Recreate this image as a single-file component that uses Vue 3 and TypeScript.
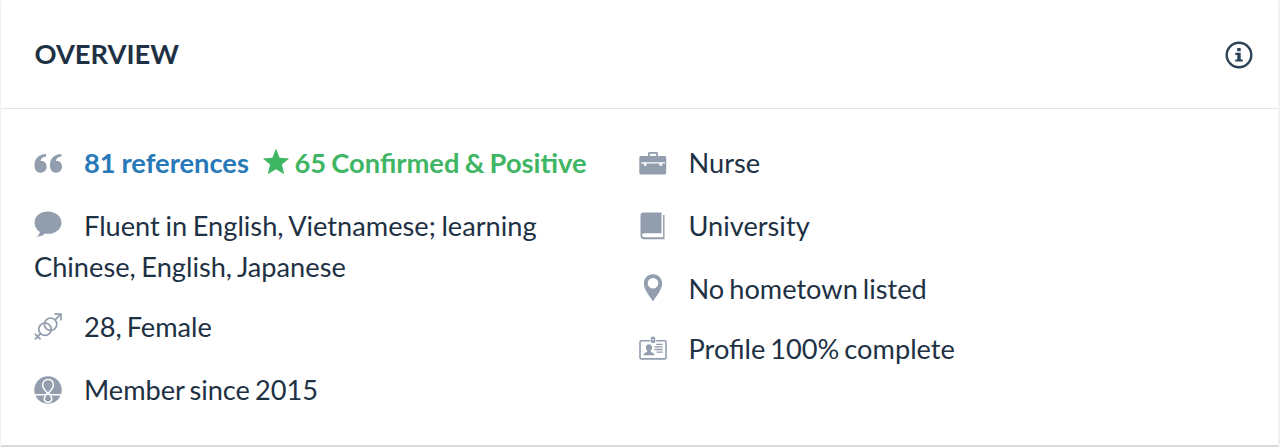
<script setup lang="ts">
type IconName = 'quote' | 'chat' | 'gender' | 'member' | 'briefcase' | 'book' | 'pin' | 'card'

interface Item {
  icon: IconName
  text: string
}

const about: Item[] = [
  { icon: 'chat', text: 'Fluent in English, Vietnamese; learning Chinese, English, Japanese' },
  { icon: 'gender', text: '28, Female' },
  { icon: 'member', text: 'Member since 2015' },
]

const details: Item[] = [
  { icon: 'briefcase', text: 'Nurse' },
  { icon: 'book', text: 'University' },
  { icon: 'pin', text: 'No hometown listed' },
  { icon: 'card', text: 'Profile 100% complete' },
]

const shapes: Record<IconName, string> = {
  quote:
    '<path d="M12 5v2.500C8.500 8 6.700 9.600 6.500 12.200c.3-.1.600-.1 1-.1 3 0 5.100 2.300 5.100 5.500 0 3.400-2.500 6.200-6 6.200-3.800 0-6.100-3-6.100-7.500C.5 9.900 4.500 5.300 12 5zM27.400 5v2.500c-3.500.5-5.300 2.100-5.500 4.700.3-.1.600-.1 1-.1 3 0 5.100 2.300 5.100 5.500 0 3.400-2.500 6.200-6 6.200-3.800 0-6.100-3-6.100-7.500 0-6.400 4-11 11.500-11.300z"/>',
  chat: '<path d="M14-.5C6.300-.5.5 4.300.5 10.700c0 3.900 2.200 7.200 5.400 9.200-.3 2.200-1.800 3.700-3.600 4.500 3.900.3 6.700-.9 8.700-2.900 1 .2 2 .3 3 .3 7.700 0 13.500-4.900 13.500-11.100S21.700-.5 14-.5z"/>',
  gender:
    '<g fill="none" stroke="currentColor" stroke-width="1.700"><circle cx="11" cy="16.200" r="6.200"/><circle cx="16.600" cy="11.200" r="6.200"/><path d="M21 6.800 27 .9M20.500 1.200H27V7.500M6.600 20.600.9 26.300M1 20.800l5.600 5.600"/></g>',
  member:
    '<circle cx="14" cy="14" r="13.700"/><path d="M1 18.800h8.500c1.800 0 2.900-.1 4.500-1.500 1.600 1.400 2.700 1.500 4.500 1.500H27M14 17.300C10.800 14.500 8.700 12.300 8.700 9c0-3.300 2.200-5.400 5.300-5.400s5.300 2.100 5.300 5.400c0 3.300-2.100 5.500-5.300 8.300-2.800 2.400-3.800 3.700-3.800 5.500 0 2.100 1.600 3.400 3.800 3.400s3.800-1.300 3.800-3.400c0-1.800-1-3.100-3.800-5.500z" fill="none" stroke="#fff" stroke-width="1.500"/>',
  briefcase:
    '<path fill-rule="evenodd" d="M9 7V4.700C9 3.600 9.700 3 10.700 3h6.600c1 0 1.700.6 1.700 1.700V7h6.500c1 0 1.700.7 1.700 1.700v15.100c0 1-.7 1.700-1.700 1.700H2c-1 0-1.700-.7-1.700-1.700V8.700C.3 7.700 1 7 2 7zm1.800 0h6.400V4.700h-6.400z"/><path d="M2 13.200h24v1.200h-2.800v2.300h-2.700v-2.300H7.500v2.300H4.800v-2.300H2z" fill="#fff"/>',
  book:
    '<path fill-rule="evenodd" d="M4.500.6h18v20.700H5.200c-1.500 0-2.200.7-2.200 1.800s.7 2.100 2.200 2.100h18.900V3.100h1.400v24.200H5c-2.300 0-3.500-1.600-3.500-4V3.500c0-1.800 1.100-2.900 3-2.900z"/>',
  pin: '<path fill-rule="evenodd" d="M14-.7c-5.100 0-9.100 3.900-9.100 9 0 6.200 4.500 11 9.100 18.200 4.600-7.200 9.100-12 9.100-18.200 0-5.100-4-9-9.100-9zm0 3.600a5.300 5.300 0 1 1 0 10.600 5.300 5.300 0 0 1 0-10.600z"/>',
  card:
    '<path d="M11.200 5.700H2.400c-.8 0-1.400.6-1.400 1.400v15.400c0 .8.6 1.400 1.400 1.400h23.200c.8 0 1.400-.6 1.400-1.400V7.100c0-.8-.6-1.400-1.400-1.400h-8.800" fill="none" stroke="currentColor" stroke-width="1.600"/><path fill-rule="evenodd" d="M13 1.700h2c.7 0 1.200.5 1.200 1.200v3.800c0 .7-.5 1.200-1.200 1.200h-2c-.7 0-1.200-.5-1.200-1.200V2.900c0-.7.5-1.200 1.200-1.200zm.3 2.300v1.300h1.400V4z"/><path d="M10 9.200c-2 0-3.100 1.400-3.100 3.300 0 1.300.5 2.400 1.300 3.100v1.200c-.3.700-3.700.9-3.700 3.500h11c0-2.600-3.400-2.800-3.700-3.500v-1.200c.8-.7 1.300-1.800 1.300-3.100 0-1.900-1.100-3.300-3.100-3.300z"/><path d="M17.200 9.300h6.500M15.500 11.900h8.200M15.500 14.500h8.200M17.500 17.100h6.200" fill="none" stroke="currentColor" stroke-width="1.300"/>',
}
</script>

<template>
  <section class="overview">
    <header class="head">
      <h2 class="title">OVERVIEW</h2>
      <svg class="info" viewBox="0 0 28 28" role="img" aria-label="Information">
        <circle cx="14" cy="14" r="12.300" fill="none" stroke="currentColor" stroke-width="2.400" />
        <path d="M12.200 7h3.500v3.200h-3.500zM10.300 11.700h5.400v6.700h2v2.200h-7.400v-2.200h2v-4.500h-2z" />
      </svg>
    </header>
    <div class="body">
      <ul class="list">
        <li class="item refs">
          <svg class="icon" viewBox="0 0 28 28" v-html="shapes.quote" />
          <a class="link">81 references</a>
          <span class="positive">
            <svg class="star" viewBox="0 0 28 28">
              <path d="M14 .8 17.700 9.700l9.500.7-7.300 6.200 2.300 9.700L14 21.200l-8.200 5.100 2.300-9.700L.8 10.400l9.500-.7z" />
            </svg>
            <span>65 Confirmed &amp; Positive</span>
          </span>
        </li>
        <li v-for="item in about" :key="item.icon" class="item" :class="`item-${item.icon}`">
          <svg class="icon" viewBox="0 0 28 28" v-html="shapes[item.icon]" />{{ item.text }}
        </li>
      </ul>
      <ul class="list">
        <li v-for="item in details" :key="item.icon" class="item" :class="`item-${item.icon}`">
          <svg class="icon" viewBox="0 0 28 28" v-html="shapes[item.icon]" />{{ item.text }}
        </li>
      </ul>
    </div>
  </section>
</template>

<style>
body {
  background: #f2f1ed;
}
</style>

<style scoped>
.overview {
  box-sizing: border-box;
  height: 447px;
  margin: 0 2px 0 1px;
  background: #fff;
  border-bottom: 2px solid #d9d9d9;
  border-radius: 3px 3px 0 0;
  color: #1e3144;
  font-family: Lato, "Liberation Sans", sans-serif;
  font-size: 27.2px;
  word-spacing: -2px;
}
.head {
  box-sizing: border-box;
  display: flex;
  align-items: center;
  justify-content: space-between;
  height: 109px;
  padding: 0 25px 0 33.5px;
  border-bottom: 1px solid #e4e4e4;
}
.title {
  margin: 0;
  font-size: 27.3px;
  font-weight: 700;
  line-height: 40px;
}
.info {
  width: 28px;
  height: 28px;
  margin-top: 1px;
  color: #2b4257;
  fill: currentColor;
}
.body {
  display: grid;
  grid-template-columns: 605px 1fr;
  padding: 34px 34px 0 33px;
}
.list {
  margin: 0;
  padding: 0;
  list-style: none;
}
.item {
  margin-bottom: 21px;
  padding-right: 48px;
  line-height: 40.5px;
}
.refs {
  display: flex;
  margin-bottom: 22.5px;
  padding-right: 0;
  white-space: nowrap;
}
.item-chat {
  margin-bottom: 20px;
  word-spacing: -1.3px;
}
.item-gender,
.item-book {
  margin-bottom: 22px;
}
.item-pin {
  margin-bottom: 20px;
}
.item-briefcase {
  margin-bottom: 22.5px;
}
.icon {
  width: 28px;
  height: 28px;
  margin-right: 22px;
  vertical-align: -4px;
  overflow: visible;
  color: #929dae;
  fill: currentColor;
}
.item-briefcase .icon,
.item-book .icon,
.item-pin .icon,
.item-card .icon {
  margin-right: 21.5px;
}
.refs .icon {
  flex: none;
  margin-top: 6px;
}
.link {
  color: #2779b7;
  font-size: 27.3px;
  font-weight: 700;
  word-spacing: -0.8px;
}
.positive {
  display: flex;
  margin-left: 13.5px;
  color: #3fb663;
  font-size: 27.3px;
  font-weight: 700;
  word-spacing: -1.4px;
}
.star {
  flex: none;
  width: 28px;
  height: 28px;
  margin: 5px 4px 0 0;
  fill: currentColor;
}
</style>
